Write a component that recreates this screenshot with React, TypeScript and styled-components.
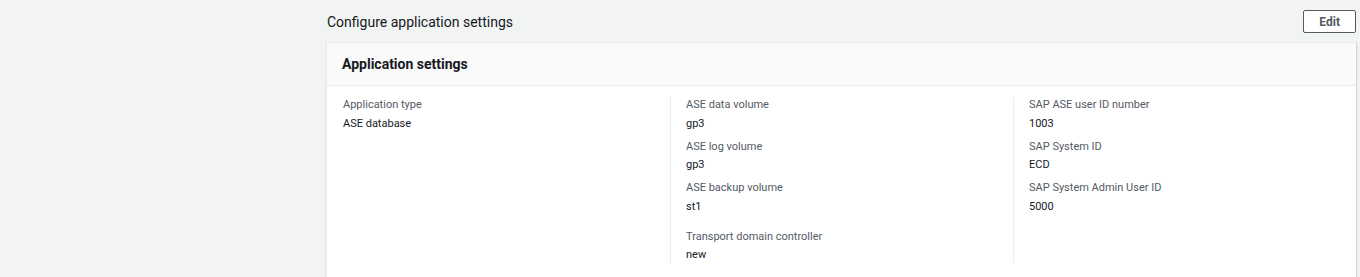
import styled, { createGlobalStyle } from 'styled-components';

const GlobalStyle = createGlobalStyle`
    html, body {
        margin: 0;
        padding: 0;
        background: #f2f3f3;
        font-family: Roboto, "Liberation Sans", Arial, sans-serif;
        color: #16191f;
    }
`

const Page = styled.div`
    height: 277px;
    overflow: hidden;
    padding: 0 3px 0 326px;
`

const TitleBar = styled.div`
    align-items: center;
    display: flex;
    height: 42px;
    justify-content: space-between;
    padding: 0 1px;
`

const PageTitle = styled.h2`
    font-size: 14px;
    font-weight: 400;
    line-height: 20px;
    margin: 0;
    padding-top: 1px;
`

const EditButton = styled.button`
    background: #ffffff;
    border: 1px solid #545b64;
    border-radius: 2px;
    color: #545b64;
    font-family: inherit;
    font-size: 12px;
    font-weight: 700;
    height: 23px;
    margin-top: 1px;
    padding: 0 15px;
`

const Card = styled.section`
    background: #ffffff;
    border: 1px solid #eaeded;
    border-right-color: #d5dbdb;
    box-shadow: 0 1px 1px 0 rgba(0, 28, 36, 0.2);
`

const CardHeader = styled.div`
    align-items: center;
    background: #fafafa;
    border-bottom: 1px solid #eaeded;
    display: flex;
    height: 42px;
    padding: 0 15px;
`

const CardTitle = styled.h3`
    font-size: 14px;
    font-weight: 700;
    margin: 0;
`

const Columns = styled.div`
    display: grid;
    grid-template-columns: repeat(3, 1fr);
    padding: 11px 0 20px;
`

const Column = styled.div<{ $divider?: boolean }>`
    border-left: 1px solid ${props => props.$divider ? '#eaeded' : 'transparent'};
    padding: 0 15px;
`

const Group = styled.div`
    & + & {
        margin-top: 14px;
    }
`

const Pair = styled.div`
    & + & {
        margin-top: 7px;
    }
`

const Label = styled.div`
    color: #545b64;
    font-size: 11px;
    line-height: 16px;
    margin-bottom: 2.5px;
`

const Value = styled.div`
    color: #16191f;
    font-size: 11px;
    line-height: 16px;
`

type Item = { label: string, value: string };

const columns: Item[][][] = [
    [
        [{ label: 'Application type', value: 'ASE database' }],
    ],
    [
        [
            { label: 'ASE data volume', value: 'gp3' },
            { label: 'ASE log volume', value: 'gp3' },
            { label: 'ASE backup volume', value: 'st1' },
        ],
        [{ label: 'Transport domain controller', value: 'new' }],
    ],
    [
        [
            { label: 'SAP ASE user ID number', value: '1003' },
            { label: 'SAP System ID', value: 'ECD' },
            { label: 'SAP System Admin User ID', value: '5000' },
        ],
    ],
];

const App = () => {
    return (
        <Page>
            <GlobalStyle />
            <TitleBar>
                <PageTitle>Configure application settings</PageTitle>
                <EditButton>Edit</EditButton>
            </TitleBar>
            <Card>
                <CardHeader>
                    <CardTitle>Application settings</CardTitle>
                </CardHeader>
                <Columns>
                    {columns.map((groups, i) => (
                        <Column key={i} $divider={i > 0}>
                            {groups.map((items, j) => (
                                <Group key={j}>
                                    {items.map(item => (
                                        <Pair key={item.label}>
                                            <Label>{item.label}</Label>
                                            <Value>{item.value}</Value>
                                        </Pair>
                                    ))}
                                </Group>
                            ))}
                        </Column>
                    ))}
                </Columns>
            </Card>
        </Page>
    )
}

export default App;
